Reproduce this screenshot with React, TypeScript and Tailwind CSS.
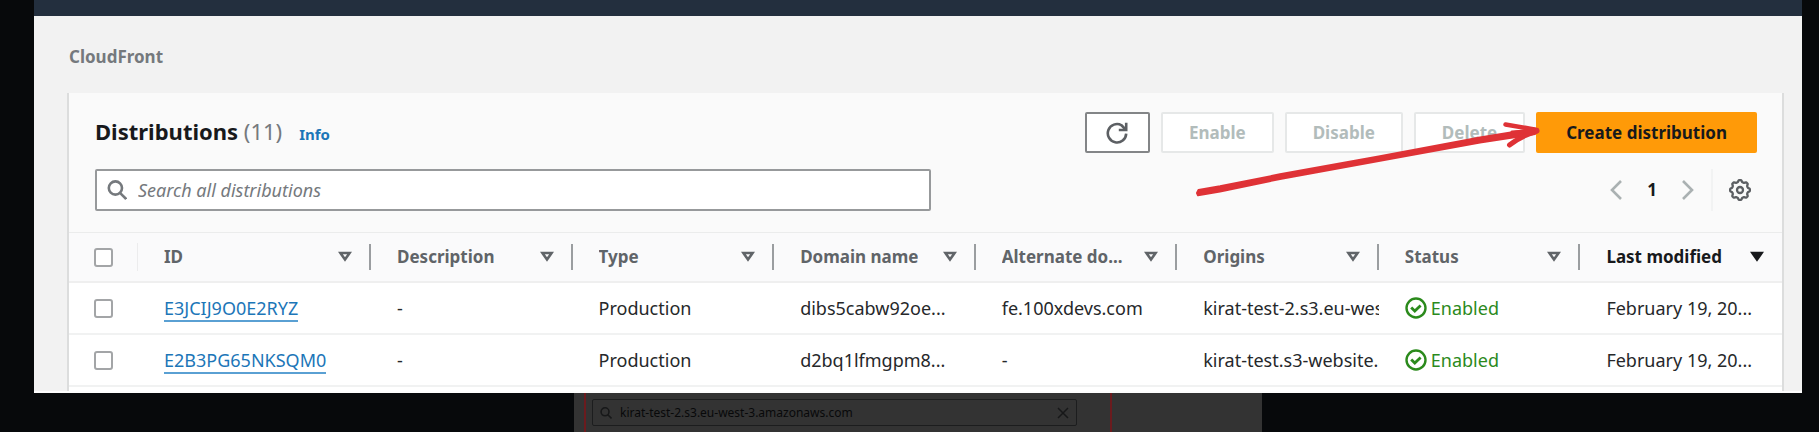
import type { ReactNode } from 'react';

const columns = ['ID', 'Description', 'Type', 'Domain name', 'Alternate do...', 'Origins', 'Status', 'Last modified'];

const rows = [
  {
    id: 'E3JCIJ9O0E2RYZ',
    domain: 'dibs5cabw92oe...',
    alternate: 'fe.100xdevs.com',
    origin: 'kirat-test-2.s3.eu-wes',
  },
  {
    id: 'E2B3PG65NKSQM0',
    domain: 'd2bq1lfmgpm8...',
    alternate: '-',
    origin: 'kirat-test.s3-website.a',
  },
];

// Outline of an eight-toothed gear with shallow, rounded teeth.
const gearOutline = Array.from({ length: 96 }, (_, i) => {
  const angle = (i / 96) * Math.PI * 2;
  const wave = Math.max(-1, Math.min(1, Math.cos(angle * 8) * 1.6));
  const radius = 9 + wave * 0.9;
  return `${(11 + radius * Math.cos(angle)).toFixed(2)},${(11 + radius * Math.sin(angle)).toFixed(2)}`;
}).join(' ');

function SearchIcon({ className }: { className: string }) {
  return (
    <svg viewBox="0 0 20 20" className={className} fill="none" stroke="currentColor" strokeWidth="2.6" aria-hidden="true">
      <circle cx="8.4" cy="8" r="6.6" />
      <path d="M13 12.8 19.2 19" />
    </svg>
  );
}

function RefreshIcon() {
  return (
    <svg viewBox="0 0 22 22" className="size-[22px]" fill="none" stroke="#5c5f63" strokeWidth="2.6" aria-hidden="true">
      <path d="M20.2 11.6A9.2 9.2 0 1 1 15.6 3.3L19 7" />
      <path d="M20.2 0.8v7.2h-7.4" />
    </svg>
  );
}

function GearIcon() {
  return (
    <svg viewBox="0 0 22 22" className="size-[22px]" fill="none" stroke="#5c5f63" strokeWidth="2.3" strokeLinejoin="round" aria-hidden="true">
      <polygon points={gearOutline} />
      <circle cx="11" cy="11" r="3" />
    </svg>
  );
}

function CheckCircle() {
  return (
    <svg viewBox="0 0 22 22" className="size-[22px] shrink-0" fill="none" stroke="currentColor" strokeWidth="2.4" aria-hidden="true">
      <circle cx="11" cy="11" r="9.5" />
      <path d="m6.2 10.4 3.6 3.6 5.8-5.6" strokeWidth="2.8" />
    </svg>
  );
}

function SortIcon({ filled }: { filled: boolean }) {
  return (
    <svg viewBox="0 0 14 12" className="h-3 w-3.5" fill={filled ? 'currentColor' : 'none'} stroke="currentColor" strokeWidth="2.6" aria-hidden="true">
      <path d="M2.4 2h9.2L7 8.6z" />
    </svg>
  );
}

function DisabledButton({ children }: { children: ReactNode }) {
  return (
    <button type="button" disabled className="h-[41px] rounded-xs border-2 border-[#e6e8e8] bg-white px-[26px] font-bold text-[#b2bcbb]">
      {children}
    </button>
  );
}

function Checkbox({ label }: { label: string }) {
  return (
    <input
      type="checkbox"
      aria-label={label}
      className="block size-[19px] appearance-none rounded-[3px] border-2 border-[#a3a5a7] bg-white checked:bg-[#0073bb]"
    />
  );
}

function Arrow() {
  return (
    <svg
      viewBox="0 0 355 82"
      className="pointer-events-none absolute top-1.5 right-[212px] h-[82px] w-[355px]"
      fill="none"
      stroke="#df3236"
      strokeLinecap="round"
      strokeLinejoin="round"
      aria-hidden="true"
    >
      <path d="M8.5 72 30 68.3 90 56.3 190 38.3 290 19.5 345 10.5 347 13.5 345 16 290 24.5 190 42.7 90 61 30 73.5 8 77.3 7 75z" fill="#df3236" strokeWidth="2" />
      <path d="M315.5 6.5Q331 9 347 12" strokeWidth="4.5" />
      <path d="M319.5 27Q330 18.5 347 13" strokeWidth="5" />
      <path d="M322 14 347 12 333 18z" fill="#df3236" strokeWidth="3" />
    </svg>
  );
}

export default function App() {
  return (
    <div className="flex min-h-screen flex-col bg-[#07090b] pr-[17px] pl-[34px] font-['Noto_Sans','Open_Sans',sans-serif] text-[17px] leading-6 text-[#26282a]">
      <div className="overflow-hidden border-b-2 border-[#fdfdfd] bg-[#f2f2f2]">
        <header className="h-4 bg-[#232f3e]" />
        <nav aria-label="Breadcrumb" className="flex h-[77px] items-center pt-1 pl-[35px]">
          <a href="#cloudfront" className="font-bold text-[#75797d]">CloudFront</a>
        </nav>

        <main className="mr-[18px] ml-[33px] border-x-2 border-[#dcdddd] bg-white pb-1">
          <div className="flex flex-col gap-4 border-b border-[#ebecec] bg-[#fafafa] pt-[19px] pr-[25px] pb-[21px] pl-[26px]">
            <div className="relative flex items-center justify-between">
              <div className="flex items-baseline gap-[17px]">
                <h1 className="text-[22px] font-bold text-[#17191c]">
                  Distributions <span className="font-normal text-[#75797d]">(11)</span>
                </h1>
                <a href="#info" className="text-[15px] font-bold text-[#1c76b8]">Info</a>
              </div>
              <div className="flex gap-[11px]">
                <button type="button" aria-label="Refresh" className="flex h-[41px] w-[65px] items-center justify-center rounded-xs border-2 border-[#838587] bg-white">
                  <RefreshIcon />
                </button>
                <DisabledButton>Enable</DisabledButton>
                <DisabledButton>Disable</DisabledButton>
                <DisabledButton>Delete</DisabledButton>
                <button type="button" className="h-[41px] rounded-xs bg-[#ff9a08] px-[30px] font-bold text-[#17191c]">Create distribution</button>
              </div>
              <Arrow />
            </div>

            <div className="flex items-center justify-between gap-6">
              <label className="flex h-[42px] w-[836px] items-center gap-[11px] rounded-xs border-2 border-[#97999b] bg-white pl-2.5 text-[18px] text-[#75797d]">
                <SearchIcon className="size-5" />
                <input
                  type="search"
                  aria-label="Search all distributions"
                  placeholder="Search all distributions"
                  className="min-w-0 flex-1 bg-transparent outline-none placeholder:text-[#75797d] placeholder:italic"
                />
              </label>
              <div className="flex items-center">
                <button type="button" aria-label="Previous page" className="px-[7px] text-[#aab1b2]">
                  <svg viewBox="0 0 12 20" className="h-5 w-3" fill="none" stroke="currentColor" strokeWidth="2.6" aria-hidden="true"><path d="m11 1-9 9 9 9" /></svg>
                </button>
                <span className="w-[46px] text-center font-bold text-[#17191c]">1</span>
                <button type="button" aria-label="Next page" className="px-[7px] text-[#aab1b2]">
                  <svg viewBox="0 0 12 20" className="h-5 w-3" fill="none" stroke="currentColor" strokeWidth="2.6" aria-hidden="true"><path d="m1 1 9 9-9 9" /></svg>
                </button>
                <button type="button" aria-label="Preferences" className="ml-2.5 flex h-[42px] items-center border-l-2 border-[#f2f3f3] pr-1.5 pl-4">
                  <GearIcon />
                </button>
              </div>
            </div>
          </div>

          <table className="w-full table-fixed border-collapse text-left">
            <colgroup>
              <col className="w-[69px]" />
              <col className="w-[233px]" />
              <col span={7} />
            </colgroup>
            <thead className="bg-[#fafafb]">
              <tr className="h-[49px] border-b-2 border-[#efefef]">
                <th className="p-0">
                  <div className="flex h-7 items-center border-r border-[#ececed] pl-[25px]">
                    <Checkbox label="Select all distributions" />
                  </div>
                </th>
                {columns.map((name) => {
                  const last = name === 'Last modified';
                  return (
                    <th key={name} className="p-0 font-bold">
                      <div className={last ? 'flex h-[26px] items-center justify-between pr-[18px] pl-[26px] text-[#17191c]' : 'flex h-[26px] items-center justify-between border-r-2 border-[#9a9da0] pr-[17px] pl-[26px] text-[#606468]'}>
                        <span className="truncate">{name}</span>
                        <button type="button" aria-label={`Sort by ${name}`} className="shrink-0">
                          <SortIcon filled={last} />
                        </button>
                      </div>
                    </th>
                  );
                })}
              </tr>
            </thead>
            <tbody className="text-[18px]">
              {rows.map((row) => (
                <tr key={row.id} className="h-[52px] border-b-2 border-[#f1f2f2]">
                  <td className="py-0 pl-[25px]"><Checkbox label={`Select ${row.id}`} /></td>
                  <td className="py-0 pl-[26px]">
                    <a href={`#${row.id}`} className="mt-0.5 inline-block border-b-2 border-[#5aa0d3] align-middle text-[#1c76b8]">{row.id}</a>
                  </td>
                  <td className="py-0 pl-[26px]">-</td>
                  <td className="py-0 pl-[26px]">Production</td>
                  <td className="py-0 pl-[26px] whitespace-nowrap">{row.domain}</td>
                  <td className="py-0 pl-[26px] whitespace-nowrap">{row.alternate}</td>
                  <td className="py-0 pl-[26px]"><div className="overflow-hidden whitespace-nowrap">{row.origin}</div></td>
                  <td className="py-0 pl-[26px]">
                    <span className="flex items-center gap-1 text-[#2b8a1c]"><CheckCircle />Enabled</span>
                  </td>
                  <td className="py-0 pl-[26px] whitespace-nowrap">February 19, 20...</td>
                </tr>
              ))}
            </tbody>
          </table>
        </main>
      </div>

      <div className="flex flex-1 justify-center">
        <section aria-label="Origin" className="w-[688px] bg-[#333333] pl-2.5">
          <div className="h-full w-[528px] border-x-2 border-[#6b1b1e] px-1.5 pt-1.5">
            <label className="flex h-[27px] w-[485px] items-center gap-2 rounded-xs border border-[#1c1d1e] px-[7px] text-[#171819]">
              <SearchIcon className="size-3" />
              <input type="text" aria-label="Origin domain" defaultValue="kirat-test-2.s3.eu-west-3.amazonaws.com" className="min-w-0 flex-1 bg-transparent text-[12px] leading-4 text-[#08090a] outline-none" />
              <button type="button" aria-label="Clear origin domain">
                <svg viewBox="0 0 12 12" className="size-3" fill="none" stroke="currentColor" strokeWidth="1.5" aria-hidden="true"><path d="m1 1 10 10M11 1 1 11" /></svg>
              </button>
            </label>
          </div>
        </section>
      </div>
    </div>
  );
}
